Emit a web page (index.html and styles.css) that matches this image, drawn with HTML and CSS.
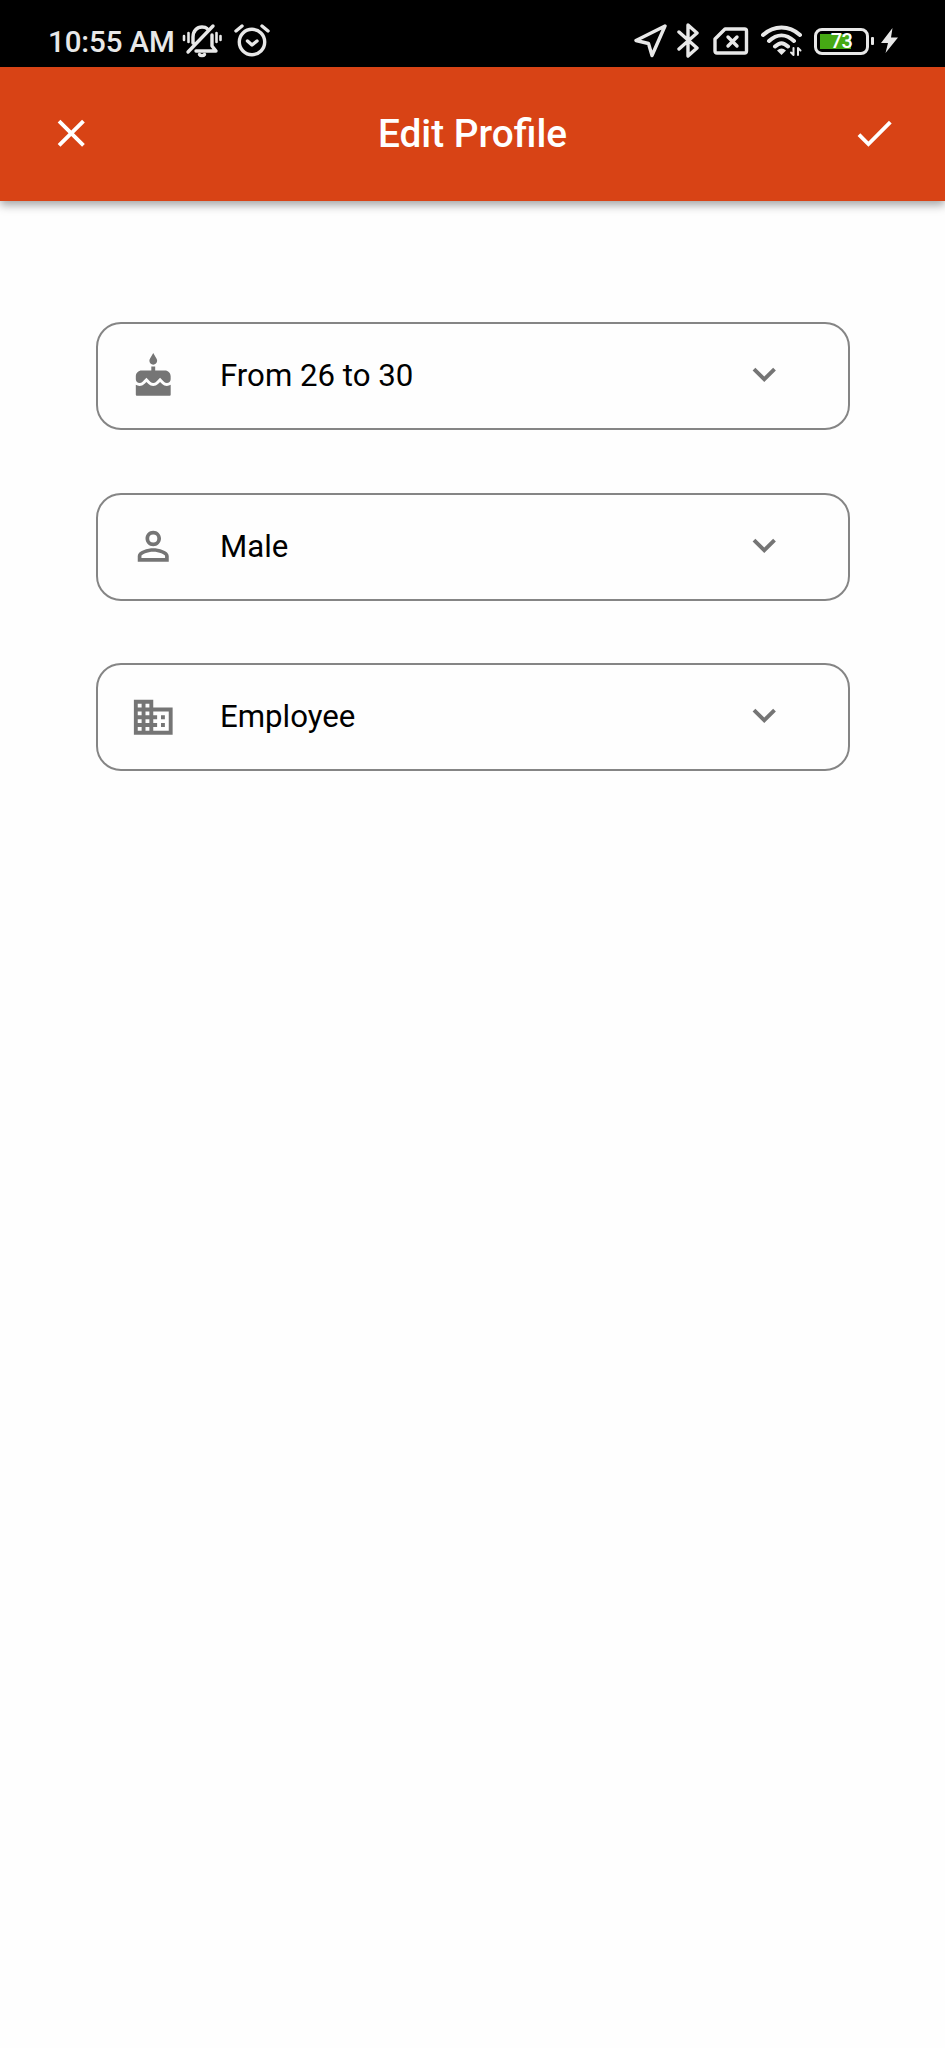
FILE: index.html
```html
<!DOCTYPE html>
<html lang="en">
<head>
<meta charset="utf-8">
<title>Edit Profile</title>
<link rel="stylesheet" href="styles.css">
</head>
<body>
<div class="status">
  <div class="status-left">
    <span class="clock">10:55 AM</span>
    <svg class="line" width="40" height="36" viewBox="0 0 40 36">
      <path d="M6 29 31 3M11 20v-6c0-6 4-10 9-10 2 0 4 .5 5 1.500M14 28h20l-4-5V12" />
      <path class="waves" d="M2 13v4M6.500 10v9M34.500 10v9M38.500 13v4"/>
      <path d="M17.500 31.500c1 1.500 4 1.500 5 0" />
    </svg>
    <svg class="line alarm" width="36" height="36" viewBox="0 0 36 36">
      <circle cx="18" cy="19" r="12.700"/><path d="m13.500 18 4.500 4 5-4M2 8l6-5M34 8l-6-5"/>
    </svg>
  </div>
  <div class="status-right">
    <svg class="line" width="34" height="36" viewBox="0 0 34 36"><path d="M31 3 2 17.500l12.500 3 3.500 12z"/></svg>
    <svg class="line bluetooth" width="24" height="36" viewBox="0 0 24 36"><path d="m2 9 18 16-9 8V2l9 8L2 26"/></svg>
    <svg class="line sim" width="36" height="28" viewBox="0 0 36 28"><path d="M12 2h19.500q2 0 2 2v20q0 2-2 2H4q-2 0-2-2V12zM15 10l9 9M24 10l-9 9"/></svg>
    <svg class="line wifi" width="42" height="32" viewBox="0 0 42 32">
      <path class="arc" d="M2 10c11-10 26-10 37 0M8 16c8-7.500 17-7.500 25 0M14 21.500c5-4.500 8-4.500 13 0"/>
      <path class="solid" d="m20.500 30-4.500-4.500q4.500-4 9 0z"/><path class="thin" d="M32.500 23v7l-2.500-2.500M37 30v-7l2.500 2.500"/>
    </svg>
    <div class="battery"><span>73</span></div>
    <i class="battery-tip"></i>
    <svg class="bolt" width="17" height="26" viewBox="0 0 17 26"><path d="M11.500 0 0 15h7L4.500 25 17 9.500h-7z"/></svg>
  </div>
</div>
<header class="appbar">
  <svg class="icon" viewBox="0 0 24 24"><path d="M19 6.410 17.590 5 12 10.590 6.410 5 5 6.410 10.590 12 5 17.590 6.410 19 12 13.410 17.590 19 19 17.590 13.410 12z"/></svg>
  <h1>Edit Profile</h1>
  <svg class="icon" viewBox="0 0 24 24"><path d="M9 16.200 4.800 12l-1.400 1.400L9 19 21 7l-1.400-1.400z"/></svg>
</header>
<main class="form">
  <div class="field">
    <svg class="icon" viewBox="0 0 24 24"><path d="M12 6c1.110 0 2-.9 2-2 0-.38-.1-.73-.29-1.030L12 0l-1.710 2.970c-.19.3-.29.65-.29 1.030 0 1.100.9 2 2 2zm4.600 9.990-1.070-1.070-1.080 1.070c-1.300 1.300-3.580 1.310-4.890 0l-1.070-1.070-1.090 1.070C6.750 16.640 5.880 17 4.960 17c-.73 0-1.400-.23-1.960-.61V21.500q0 .5.5.5h17q.5 0 .5-.5v-5.110c-.56.38-1.230.61-1.960.61-.92 0-1.790-.36-2.440-1.010zM18 9h-5V7h-2v2H6c-1.660 0-3 1.340-3 3v1.540c0 1.080.88 1.960 1.960 1.960.52 0 1.020-.2 1.380-.57l2.140-2.130 2.130 2.130c.74.74 2.030.74 2.770 0l2.140-2.130 2.130 2.130c.37.37.86.57 1.380.57 1.080 0 1.960-.88 1.960-1.960V12c0-1.660-1.330-3-2.990-3z"/></svg>
    <span class="value">From 26 to 30</span>
    <svg class="chevron" viewBox="0 0 24 24"><path d="M16.590 8.590 12 13.170 7.410 8.590 6 10l6 6 6-6z"/></svg>
  </div>
  <div class="field">
    <svg class="icon" viewBox="0 0 24 24"><path d="M12 5.900a2.100 2.100 0 1 1 0 4.200 2.100 2.100 0 0 1 0-4.200m0 9c2.970 0 6.100 1.460 6.100 2.100v1.100H5.900V17c0-.64 3.130-2.100 6.100-2.100M12 4C9.790 4 8 5.790 8 8s1.790 4 4 4 4-1.790 4-4-1.790-4-4-4zm0 9c-2.670 0-8 1.340-8 4v3h16v-3c0-2.660-5.330-4-8-4z"/></svg>
    <span class="value">Male</span>
    <svg class="chevron" viewBox="0 0 24 24"><path d="M16.590 8.590 12 13.170 7.410 8.590 6 10l6 6 6-6z"/></svg>
  </div>
  <div class="field">
    <svg class="icon" viewBox="0 0 24 24"><path d="M12 7V3H2v18h20V7H12zM6 19H4v-2h2v2zm0-4H4v-2h2v2zm0-4H4V9h2v2zm0-4H4V5h2v2zm4 12H8v-2h2v2zm0-4H8v-2h2v2zm0-4H8V9h2v2zm0-4H8V5h2v2zm10 12h-8v-2h2v-2h-2v-2h2v-2h-2V9h8v10zm-2-8h-2v2h2v-2zm0 4h-2v2h2v-2z"/></svg>
    <span class="value">Employee</span>
    <svg class="chevron" viewBox="0 0 24 24"><path d="M16.590 8.590 12 13.170 7.410 8.590 6 10l6 6 6-6z"/></svg>
  </div>
</main>
</body>
</html>
```
FILE: styles.css
```css
* { box-sizing: border-box; }
body { margin: 0; min-height: 2048px; background: #fefefe; font-family: Roboto, sans-serif; color: #000; }
svg { display: block; flex: none; }
.status { display: flex; justify-content: space-between; height: 67px; padding: 16px 47px 0 48px; background: #000; color: #e8e8e8; }
.status-left, .status-right { display: flex; align-items: center; height: 50px; }
.clock { width: 134px; padding-top: 2px; font-size: 29.500px; font-weight: 500; line-height: 50px; letter-spacing: -.1px; white-space: nowrap; }
.line { fill: none; stroke: #e8e8e8; stroke-width: 3.4; stroke-linecap: round; stroke-linejoin: round; }
.waves { stroke-width: 2.6; }
.alarm { margin-left: 12px; }
.bluetooth { margin-left: 9px; }
.sim { margin-left: 12px; }
.wifi { margin-left: 12px; }
.arc { stroke-width: 4; }
.solid { fill: #e8e8e8; stroke: none; }
.thin { stroke-width: 2; }
.battery { width: 55px; height: 27px; margin-left: 11px; border: 3px solid #e8e8e8; border-radius: 8px; background: linear-gradient(#46a914, #46a914) 3px 3px / 31px 15px no-repeat; color: #fff; display: flex; align-items: center; justify-content: center; font-size: 20px; font-weight: 500; letter-spacing: -.5px; }
.battery-tip { width: 3px; height: 8px; margin-left: 2px; border-radius: 1px; background: #e8e8e8; }
.bolt { margin-left: 7px; fill: #e8e8e8; }
.appbar { display: flex; align-items: center; justify-content: space-between; height: 134px; padding: 0 48px 1px; background: #d84315; color: #fff; fill: #fff; box-shadow: 0 4px 9px rgba(0, 0, 0, .36); }
.icon { width: 46.500px; height: 46.500px; }
.appbar h1 { margin: 0; font-size: 38.800px; font-weight: 500; line-height: 46px; }
.form { display: flex; flex-direction: column; gap: 62.600px; padding: 121px 95px 0 96px; }
.field { display: flex; align-items: center; height: 108px; padding: 0 61px 0 32px; border: 2px solid #858585; border-radius: 25px; fill: #757575; }
.value { flex: 1; margin-left: 43.500px; font-size: 31.200px; line-height: 40px; }
.chevron { width: 46.500px; height: 46.500px; margin-bottom: 3px; }
```
